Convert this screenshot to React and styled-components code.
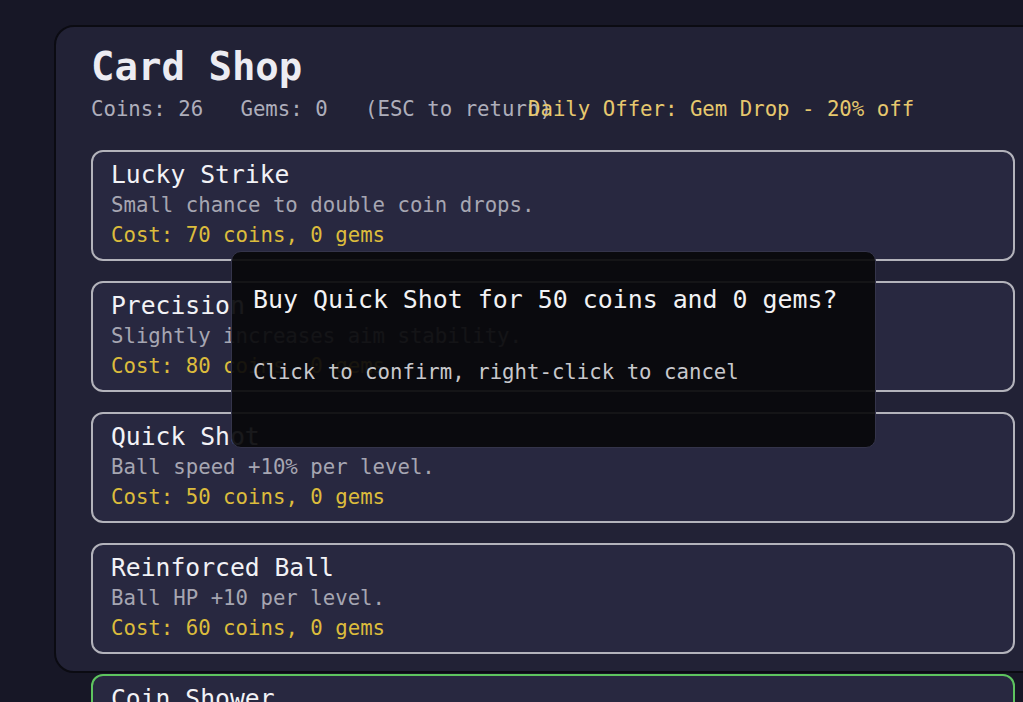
import React from "react";
import styled, { createGlobalStyle } from "styled-components";

const GlobalStyle = createGlobalStyle`
  html, body {
    margin: 0;
    padding: 0;
    background: #171726;
    overflow: hidden;
  }
  body {
    font-family: "DejaVu Sans Mono", "Liberation Mono", monospace;
  }
`;

const CARDS = [
  {
    name: "Lucky Strike",
    desc: "Small chance to double coin drops.",
    coins: 70,
    gems: 0,
  },
  {
    name: "Precision",
    desc: "Slightly increases aim stability.",
    coins: 80,
    gems: 0,
  },
  {
    name: "Quick Shot",
    desc: "Ball speed +10% per level.",
    coins: 50,
    gems: 0,
  },
  {
    name: "Reinforced Ball",
    desc: "Ball HP +10 per level.",
    coins: 60,
    gems: 0,
  },
  {
    name: "Coin Shower",
    desc: "More coins drop from bricks.",
    coins: 90,
    gems: 0,
    owned: true,
  },
];

const App = () => {
  const pending = CARDS[2];

  return (
    <>
      <GlobalStyle />
      <Screen>
        <Panel>
          <Title>Card Shop</Title>
          <StatsRow>
            <Stats>{"Coins: 26   Gems: 0   (ESC to return)"}</Stats>
            <Offer>Daily Offer: Gem Drop - 20% off</Offer>
          </StatsRow>
          <CardList>
            {CARDS.map((card) => (
              <Card key={card.name} $owned={card.owned}>
                <CardName>{card.name}</CardName>
                <CardDesc>{card.desc}</CardDesc>
                <CardCost>
                  Cost: {card.coins} coins, {card.gems} gems
                </CardCost>
              </Card>
            ))}
          </CardList>
        </Panel>

        <Confirm>
          <ConfirmTitle>
            Buy {pending.name} for {pending.coins} coins and {pending.gems} gems?
          </ConfirmTitle>
          <ConfirmHint>Click to confirm, right-click to cancel</ConfirmHint>
        </Confirm>
      </Screen>
    </>
  );
};

const Screen = styled.div`
  position: relative;
  width: 1023px;
  height: 702px;
  padding: 25px 0 0 54px;
  box-sizing: border-box;
  overflow: hidden;
`;

const Panel = styled.div`
  box-sizing: border-box;
  width: 998px;
  height: 648px;
  padding: 17px 35px 0 35px;
  background: #222236;
  border: 2px solid #0b0b12;
  border-radius: 20px;
`;

const Title = styled.h1`
  margin: 0;
  font-size: 39px;
  line-height: 46px;
  font-weight: bold;
  color: #ececf2;
`;

const StatsRow = styled.div`
  position: relative;
  margin-top: 4px;
  height: 30px;
  font-size: 20.7px;
  line-height: 30px;
  white-space: pre;
`;

const Stats = styled.span`
  color: #aeaebb;
`;

const Offer = styled.span`
  position: absolute;
  top: 0;
  left: 437px;
  color: #e6c86e;
`;

const CardList = styled.div`
  margin-top: 26px;
  display: flex;
  flex-direction: column;
  gap: 20px;
`;

const Card = styled.div`
  box-sizing: border-box;
  height: 111px;
  padding: 8px 18px;
  background: #282840;
  border: 2px solid ${({ $owned }) => ($owned ? "#5ec45f" : "#b3b3bb")};
  border-radius: 12px;
`;

const CardName = styled.div`
  font-size: 24.7px;
  line-height: 30px;
  color: #f2f2f6;
`;

const CardDesc = styled.div`
  font-size: 20.7px;
  line-height: 30px;
  color: #a6a6b2;
`;

const CardCost = styled.div`
  font-size: 20.7px;
  line-height: 30px;
  color: #dcbc3c;
`;

const Confirm = styled.div`
  position: absolute;
  left: 231px;
  top: 251px;
  box-sizing: border-box;
  width: 645px;
  height: 197px;
  padding: 33px 21px 0;
  background: rgba(9, 9, 11, 0.93);
  border: 1px solid #34344a;
  border-radius: 10px;
`;

const ConfirmTitle = styled.div`
  font-size: 24.9px;
  line-height: 30px;
  color: #f2f2f4;
`;

const ConfirmHint = styled.div`
  margin-top: 42px;
  font-size: 20.7px;
  line-height: 30px;
  color: #c8c8cc;
`;

export default App;
